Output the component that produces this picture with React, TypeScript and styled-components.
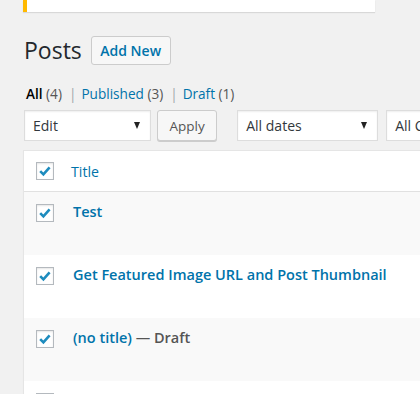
import React from "react";
import styled, { createGlobalStyle } from "styled-components";

const GlobalStyle = createGlobalStyle`
  html, body {
    margin: 0;
    padding: 0;
    background: #f1f1f1;
    overflow: hidden;
  }
  body {
    font-family: "Open Sans", "Noto Sans", sans-serif;
    color: #23282d;
    font-size: 13px;
  }
`;

const Page = styled.div`
  padding-left: 23px;
  width: 700px;
`;

const Notice = styled.div`
  width: 348px;
  height: 12px;
  background: #fff;
  border-left: 4px solid #ffb900;
  box-shadow: 0 1px 1px rgba(0, 0, 0, 0.1);
`;

const HeadRow = styled.div`
  display: flex;
  align-items: center;
  margin-top: 24px;
  height: 29px;
`;

const Heading = styled.h1`
  margin: 0 0 0 1px;
  font-size: 23px;
  font-weight: 400;
  line-height: 29px;
  color: #23282d;
`;

const Button = styled.button<{ $primaryText?: boolean }>`
  box-sizing: border-box;
  height: ${(p) => (p.$primaryText ? "29px" : "31px")};
  margin-left: ${(p) => (p.$primaryText ? "9px" : "6px")};
  padding: 0 ${(p) => (p.$primaryText ? "8.5px" : "11.5px")};
  border: 1px solid #ccc;
  border-radius: 3px;
  background: #f7f7f7;
  box-shadow: ${(p) => (p.$primaryText ? "none" : "0 1px 0 #ccc")};
  font-family: inherit;
  font-size: ${(p) => (p.$primaryText ? "14px" : "13.5px")};
  font-weight: ${(p) => (p.$primaryText ? 600 : 400)};
  color: ${(p) => (p.$primaryText ? "#0073aa" : "#555")};
  cursor: pointer;
`;

const Filters = styled.ul`
  display: flex;
  list-style: none;
  margin: 21px 0 0 3px;
  padding: 0;
  height: 16px;
  line-height: 16px;
  font-size: 13.6px;
  color: #666;
`;

const FilterItem = styled.li`
  white-space: pre;
`;

const FilterLink = styled.a<{ $current?: boolean }>`
  color: ${(p) => (p.$current ? "#000" : "#0073aa")};
  font-weight: ${(p) => (p.$current ? 600 : 400)};
  text-decoration: none;
`;

const Count = styled.span`
  color: #555;
`;

const Sep = styled.span`
  color: #a0a5aa;
  margin: 0 5px 0 7px;
`;

const TableNav = styled.div`
  display: flex;
  align-items: flex-start;
  margin: 8px 0 0 1px;
  height: 40px;
`;

const Select = styled.div<{ $width: number; $gap?: number }>`
  box-sizing: border-box;
  display: flex;
  align-items: center;
  justify-content: space-between;
  width: ${(p) => p.$width}px;
  height: 31px;
  margin-left: ${(p) => p.$gap ?? 0}px;
  padding: 0 10px 0 8px;
  background: #fff;
  border: 1px solid #ddd;
  box-shadow: inset 0 1px 2px rgba(0, 0, 0, 0.07);
  font-size: 14px;
  color: #32373c;
  white-space: nowrap;
  flex-shrink: 0;
`;

const Arrow = styled.span`
  width: 0;
  height: 0;
  border-left: 3.5px solid transparent;
  border-right: 3.5px solid transparent;
  border-top: 7px solid #222;
`;

const Table = styled.div`
  box-sizing: border-box;
  width: 640px;
  background: #fff;
  border: 1px solid #e5e5e5;
  box-shadow: 0 1px 1px rgba(0, 0, 0, 0.04);
`;

const HeaderRow = styled.div`
  display: flex;
  align-items: center;
  height: 40px;
  border-bottom: 1px solid #e1e1e1;
`;

const Row = styled.div<{ $alt?: boolean }>`
  display: flex;
  align-items: flex-start;
  height: 63px;
  background: ${(p) => (p.$alt ? "#f9f9f9" : "#fff")};
`;

const CheckCell = styled.div<{ $top?: number }>`
  width: 46px;
  padding: ${(p) => p.$top ?? 0}px 0 0 12px;
  box-sizing: border-box;
  flex-shrink: 0;
`;

const Box = styled.span`
  box-sizing: border-box;
  display: flex;
  align-items: center;
  justify-content: center;
  width: 18px;
  height: 18px;
  background: #fff;
  border: 1px solid #b4b9be;
  box-shadow: inset 0 1px 2px rgba(0, 0, 0, 0.1);
`;

const ColumnTitle = styled.a`
  color: #0073aa;
  font-size: 14.2px;
  text-decoration: none;
  margin-left: 1px;
`;

const TitleCell = styled.div`
  padding: 10px 0 0 3px;
  font-size: 14.5px;
  font-weight: 600;
  line-height: 20px;
  white-space: nowrap;
`;

const PostLink = styled.a`
  color: #0073aa;
  text-decoration: none;
`;

const State = styled.span`
  color: #555;
`;

const Check = () => (
  <Box>
    <svg width="14" height="14" viewBox="0 0 14 14">
      <path
        d="M2.2 7.2 L5.4 10.4 L11.6 3.4"
        fill="none"
        stroke="#1e8cbe"
        strokeWidth="2.6"
      />
    </svg>
  </Box>
);

const posts = [
  { title: "Test" },
  { title: "Get Featured Image URL and Post Thumbnail" },
  { title: "(no title)", state: "Draft" },
];

export default function App() {
  return (
    <Page>
      <GlobalStyle />
      <Notice />
      <HeadRow>
        <Heading>Posts</Heading>
        <Button $primaryText>Add New</Button>
      </HeadRow>
      <Filters>
        <FilterItem>
          <FilterLink $current>All</FilterLink> <Count>(4)</Count>
          <Sep>|</Sep>
        </FilterItem>
        <FilterItem>
          <FilterLink>Published</FilterLink> <Count>(3)</Count>
          <Sep>|</Sep>
        </FilterItem>
        <FilterItem>
          <FilterLink>Draft</FilterLink> <Count>(1)</Count>
        </FilterItem>
      </Filters>
      <TableNav>
        <Select $width={127}>
          Edit <Arrow />
        </Select>
        <Button>Apply</Button>
        <Select $width={141} $gap={20}>
          All dates <Arrow />
        </Select>
        <Select $width={160} $gap={8}>
          All Categories <Arrow />
        </Select>
      </TableNav>
      <Table>
        <HeaderRow>
          <CheckCell>
            <Check />
          </CheckCell>
          <ColumnTitle>Title</ColumnTitle>
        </HeaderRow>
        {posts.map((p, i) => (
          <Row key={i} $alt={i % 2 === 0}>
            <CheckCell $top={12}>
              <Check />
            </CheckCell>
            <TitleCell>
              <PostLink>{p.title}</PostLink>
              {p.state && <State> — {p.state}</State>}
            </TitleCell>
          </Row>
        ))}
        <Row>
          <CheckCell $top={12}>
            <Check />
          </CheckCell>
        </Row>
      </Table>
    </Page>
  );
}
